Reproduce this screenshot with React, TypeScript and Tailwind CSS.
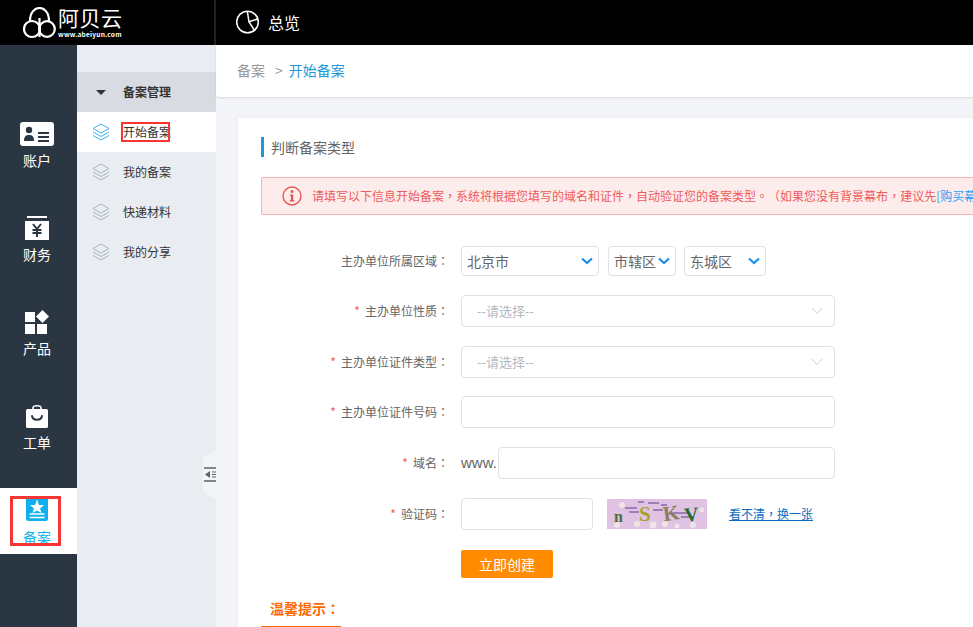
import type { ReactNode } from 'react';

const FONT = "font-['Noto_Sans_CJK_SC','Liberation_Sans',sans-serif]";

// centred full-width punctuation, as in the screenshot
function P({ children }: { children: string }) {
  return <span className="font-['Noto_Sans_CJK_TC',sans-serif]">{children}</span>;
}

function LayersIcon({ active }: { active?: boolean }) {
  const color = active ? '#3cb0f0' : '#a8b5c6';
  return (
    <svg width="18" height="18" viewBox="0 0 18 18" fill="none" stroke={color} strokeWidth="1">
      <path d="M9 1 L17 5.5 L9 10 L1 5.5 Z" />
      <path d="M1 9 L9 13.5 L17 9" />
      <path d="M1 12.5 L9 17 L17 12.5" />
    </svg>
  );
}

function ChevronBlue() {
  return (
    <svg width="12" height="8" viewBox="0 0 12 8" fill="none" stroke="#1c8fe8" strokeWidth="2.2">
      <path d="M1 1.5 L6 6 L11 1.5" />
    </svg>
  );
}

function AccountIcon() {
  return (
    <svg width="34" height="24" viewBox="0 0 34 24">
      <rect width="34" height="24" rx="3" fill="#fff" />
      <circle cx="9" cy="8" r="3.2" fill="#2b3643" />
      <path d="M4 19 C4 14 6 13 9 13 C12 13 14 14 14 19 Z" fill="#2b3643" />
      <path d="M18 11 H29 M18 15 H29 M18 19 H29" stroke="#2b3643" strokeWidth="2" />
    </svg>
  );
}

function FinanceIcon() {
  return (
    <svg width="24" height="24" viewBox="0 0 24 24">
      <rect x="2" y="0" width="20" height="2" fill="#fff" />
      <rect x="0" y="5" width="24" height="19" fill="#fff" />
      <path d="M8 8 L12 13 L16 8 M7.5 14 H16.5 M7.5 17 H16.5 M12 13 V21" stroke="#2b3643" strokeWidth="2" fill="none" />
    </svg>
  );
}

function ProductIcon() {
  return (
    <svg width="24" height="24" viewBox="0 0 24 24" fill="#fff">
      <rect x="0" y="2" width="10" height="10" />
      <rect x="0" y="14" width="10" height="10" />
      <rect x="12" y="14" width="10" height="10" />
      <path d="M17.5 0 L24 6.5 L17.5 13 L11 6.5 Z" />
    </svg>
  );
}

function TicketIcon() {
  return (
    <svg width="22" height="24" viewBox="0 0 22 24" fill="none">
      <path d="M7 6 V4 C7 1 15 1 15 4 V6" stroke="#fff" strokeWidth="1.6" />
      <path d="M1.5 5 H20.5 A1.5 1.5 0 0 1 22 6.5 V22.5 A1.5 1.5 0 0 1 20.5 24 H1.5 A1.5 1.5 0 0 1 0 22.5 V6.5 A1.5 1.5 0 0 1 1.5 5 Z" fill="#fff" />
      <path d="M6 12 C7 17 15 17 16 12" stroke="#2b3643" strokeWidth="2" strokeLinecap="round" />
    </svg>
  );
}

function RecordIcon() {
  return (
    <svg width="22" height="23" viewBox="0 0 22 23">
      <path d="M0 0 H22 V20.5 A2.5 2.5 0 0 1 19.5 23 H2.5 A2.5 2.5 0 0 1 0 20.5 Z" fill="#10b0ee" />
      <path d="M11 1.5 L13 7 L18 7 L14 10.5 L15.5 15 L11 12.5 L6.5 15 L8 10.5 L4 7 L9 7 Z" fill="#fff" />
      <path d="M3.5 16 H18.5 M3.5 19.5 H18.5" stroke="#fff" strokeWidth="1.4" />
    </svg>
  );
}

function RailItem({ icon, label, active }: { icon: ReactNode; label: string; active?: boolean }) {
  return (
    <div className={`relative flex h-[66px] flex-col items-center pr-[3px] pt-[10px] ${active ? 'bg-white text-[#10b0ee]' : 'text-white'}`}>
      <div className="flex h-[26px] items-start justify-center">{icon}</div>
      <div className={`text-[14px] leading-[20px] ${active ? 'mt-[3px]' : 'mt-[2px]'}`}>{label}</div>
    </div>
  );
}

function FormRow({ label, required, children, className = '' }: { label?: string; required?: boolean; children: ReactNode; className?: string }) {
  return (
    <div className={`flex items-center ${className}`}>
      <div className="w-[188px] shrink-0 text-right text-[12px] text-[#666]">
        {required && <span className="mr-[5px] text-[#ee5a5a]">*</span>}
        {label}
        <P>：</P>
      </div>
      <div className="ml-[12px] flex items-center">{children}</div>
    </div>
  );
}

function RegionSelect({ value, width }: { value: string; width: string }) {
  return (
    <div className={`flex h-[30px] items-center justify-between rounded-[4px] border border-[#dfe1ea] pl-[5px] pr-[5px] text-[14px] text-[#666] ${width}`}>
      <span>{value}</span>
      <ChevronBlue />
    </div>
  );
}

function PlaceholderSelect() {
  return (
    <div className="flex h-[32px] w-[374px] items-center justify-between rounded-[4px] border border-[#dfe1ea] pl-[15px] pr-[11px] text-[13px] text-[#b5b9c2]">
      <span>--请选择--</span>
      <svg width="12" height="8" viewBox="0 0 12 8" fill="none" stroke="#ccd0d8" strokeWidth="1">
        <path d="M1 1 L6 6.5 L11 1" />
      </svg>
    </div>
  );
}

function Captcha() {
  return (
    <svg width="100" height="30" viewBox="0 0 100 30" className="ml-[14px]">
      <rect width="100" height="30" fill="#e0c3e2" />
      <g fill="#f2f2e6" opacity="0.75">
        <circle cx="15" cy="6" r="3" />
        <circle cx="10" cy="26" r="3" />
        <circle cx="30" cy="25" r="3" />
        <circle cx="46" cy="26" r="3.5" />
        <circle cx="58" cy="25" r="3" />
        <circle cx="70" cy="27" r="2.5" />
        <circle cx="86" cy="26" r="3" />
        <circle cx="95" cy="11" r="2.5" />
      </g>
      <path d="M31 3 H37 M41 4 H52 M54 6 H60 M18 9 H30 M22 13 H32 M46 11 H56 M66 14 H80 M74 18 H86" stroke="#5b3a8c" strokeWidth="1" />
      <g fontFamily="'Liberation Serif', serif" fontWeight="700">
        <text x="7" y="23" fontSize="16" fill="#4d6e3c">n</text>
        <text x="32" y="22" fontSize="21" fill="#a5a32e">S</text>
        <text x="56" y="21" fontSize="21" fill="#8b7d5d" transform="rotate(-8 65 15)">K</text>
        <text x="77" y="22" fontSize="20" fill="#1f6d2a" transform="rotate(-5 85 15)">V</text>
      </g>
    </svg>
  );
}

function SideRow({ label, active }: { label: string; active?: boolean }) {
  return (
    <div className={`flex h-[40px] items-center pl-[15px] text-[12px] text-[#333] ${active ? 'bg-white' : ''}`}>
      <LayersIcon active={active} />
      <span className="ml-[13px]">{label}</span>
    </div>
  );
}

export default function App() {
  return (
    <div className={`relative flex h-[627px] w-[973px] flex-col overflow-hidden bg-[#f3f4f8] ${FONT}`}>
      <header className="flex h-[45px] shrink-0 items-center bg-black text-white">
        <div className="flex h-full w-[216px] shrink-0 items-center border-r-2 border-[#222] pl-[23px]">
          <svg width="33" height="33" viewBox="0 0 33 33" fill="none" stroke="#fff" strokeWidth="2.2" className="mt-[1px]">
            <circle cx="9" cy="22" r="8" />
            <circle cx="24" cy="22" r="7.8" />
            <path d="M16.5 11 V30" />
            <path d="M7 14 C7 5 12 1 16.5 1 C21 1 26 5 26 14" />
          </svg>
          <div className="ml-[2px] flex flex-col pb-[1px]">
            <span className="text-[21px] leading-[22px] tracking-[0.5px]">阿贝云</span>
            <span className="mt-[3px] text-[6.6px] font-bold leading-[7px] tracking-[0.2px]">www.abeiyun.com</span>
          </div>
        </div>
        <div className="flex items-center pb-[2px]">
          <svg width="24" height="24" viewBox="0 0 24 24" fill="none" stroke="#fff" strokeWidth="1.5" className="ml-[20px]">
            <circle cx="11.5" cy="12" r="10.8" />
            <path d="M11.3 1.2 L13 11.8 L21.5 9 M13 11.8 L19 21" />
          </svg>
          <span className="ml-[8px] text-[16px]">总览</span>
        </div>
      </header>

      <div className="flex min-h-0 flex-1">
        <nav className="w-[77px] shrink-0 bg-[#2b3643] pt-[67px]">
          <div className="flex flex-col gap-[28px]">
            <RailItem icon={<AccountIcon />} label="账户" />
            <RailItem icon={<FinanceIcon />} label="财务" />
            <RailItem icon={<ProductIcon />} label="产品" />
            <RailItem icon={<TicketIcon />} label="工单" />
            <RailItem icon={<RecordIcon />} label="备案" active />
          </div>
        </nav>

        <aside className="w-[139px] shrink-0 bg-[#e9ecf1] pt-[27px]">
          <div className="flex h-[40px] items-center bg-[#d8dbe2] pl-[19px] text-[12px] font-bold text-[#333]">
            <span className="h-0 w-0 border-x-[5px] border-t-[5px] border-x-transparent border-t-[#333]" />
            <span className="ml-[17px]">备案管理</span>
          </div>
          <SideRow label="开始备案" active />
          <SideRow label="我的备案" />
          <SideRow label="快递材料" />
          <SideRow label="我的分享" />
        </aside>

        <main className="min-w-0 flex-1">
          <div className="flex h-[52px] items-center rounded-bl-[3px] bg-white pb-[2px] pl-[21px] text-[14px] shadow-[0_1px_2px_rgba(0,0,0,0.12)]">
            <span className="text-[#999]">备案</span>
            <span className="ml-[10px] text-[#999]">&gt;</span>
            <span className="ml-[6px] text-[#1b9ad6]">开始备案</span>
          </div>

          <section className="ml-[21px] mt-[20px] h-[600px] w-[800px] border border-[#eceef3] bg-white pl-[23px] pt-[19px]">
            <div className="flex h-[20px] items-center border-l-[3px] border-[#1b9ad6] pl-[7px] text-[14px] text-[#666]">判断备案类型</div>

            <div className="mt-[20px] flex h-[38px] items-center whitespace-nowrap rounded-[2px] border border-[#f8b0b0] bg-[#fdecec] pl-[20px] text-[12px] text-[#ef5b5b] [text-spacing-trim:space-all]">
              <svg width="20" height="20" viewBox="0 0 20 20" className="shrink-0">
                <circle cx="10" cy="10" r="9" fill="none" stroke="#e95555" strokeWidth="1.4" />
                <circle cx="10" cy="5.6" r="1.5" fill="#e95555" />
                <path d="M8 8.5 H11.2 V14 H12.2 V15.4 H7.8 V14 H8.9 V10 H8 Z" fill="#e95555" />
              </svg>
              <span className="ml-[10px]">请填写以下信息开始备案<P>，</P>系统将根据您填写的域名和证件<P>，</P>自动验证您的备案类型<P>。</P><P>（</P>如果您没有背景幕布<P>，</P>建议先<span className="text-[#2a9df4]">[购买幕布]</span></span>
            </div>

            <div className="mt-[31px] flex flex-col">
              <FormRow label="主办单位所属区域">
                <RegionSelect value="北京市" width="w-[138px]" />
                <div className="ml-[9px]"><RegionSelect value="市辖区" width="w-[68px]" /></div>
                <div className="ml-[8px]"><RegionSelect value="东城区" width="w-[82px]" /></div>
              </FormRow>
              <FormRow label="主办单位性质" required className="mt-[19px]">
                <PlaceholderSelect />
              </FormRow>
              <FormRow label="主办单位证件类型" required className="mt-[19px]">
                <PlaceholderSelect />
              </FormRow>
              <FormRow label="主办单位证件号码" required className="mt-[18px]">
                <div className="h-[32px] w-[374px] rounded-[4px] border border-[#dfe1ea]" />
              </FormRow>
              <FormRow label="域名" required className="mt-[19px]">
                <span className="w-[37px] font-['Liberation_Sans',sans-serif] text-[15px] text-[#666]">www.</span>
                <div className="h-[32px] w-[337px] rounded-[4px] border border-[#dfe1ea]" />
              </FormRow>
              <FormRow label="验证码" required className="mt-[19px]">
                <div className="h-[32px] w-[132px] rounded-[4px] border border-[#dfe1ea]" />
                <Captcha />
                <a className="ml-[22px] text-[12px] text-[#0a6cc4] underline">看不清<P>，</P>换一张</a>
              </FormRow>
              <div className="ml-[200px] mt-[20px]">
                <button type="button" className="h-[28px] w-[92px] rounded-[2px] bg-[#ff8c00] text-[14px] text-white">立即创建</button>
              </div>
              <div className="mt-[17px] w-[80px] border-b border-[#ff6a00] pb-[5px] pl-[9px] text-[14px] font-bold leading-[26px] text-[#ff6a00]">温馨提示<P>：</P></div>
            </div>
          </section>
        </main>
      </div>

      {/* collapse tab */}
      <svg width="13" height="50" viewBox="0 0 13 50" className="absolute left-[203px] top-[450px]">
        <path d="M13 0 L0 8 V42 L13 50 Z" fill="#f3f4f6" />
        <path d="M1 18 H13 M1 31 H13" stroke="#5a6472" strokeWidth="1.6" />
        <path d="M2 24.5 L7 21 V28 Z" fill="#5a6472" />
        <path d="M9 22 H13 M9 24.5 H13 M9 27 H13" stroke="#5a6472" strokeWidth="1.2" />
      </svg>

      {/* red annotation boxes from the screenshot */}
      <div className="pointer-events-none absolute left-[121px] top-[122px] h-[20px] w-[49px] border-2 border-[#f73535]" />
      <div className="pointer-events-none absolute left-[10px] top-[496px] h-[50px] w-[51px] border-[3px] border-[#f73535]" />
    </div>
  );
}
